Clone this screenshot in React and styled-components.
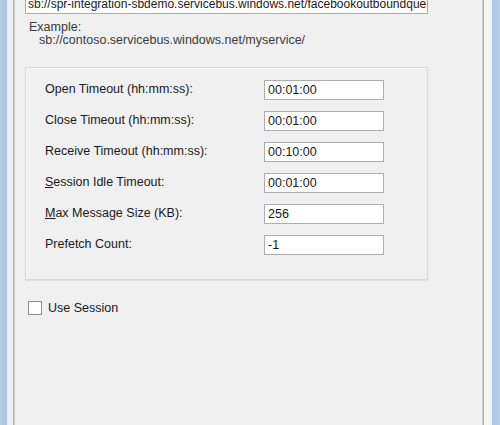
import React from "react";
import styled, { createGlobalStyle } from "styled-components";

const Global = createGlobalStyle`
  html, body {
    margin: 0;
    padding: 0;
    width: 500px;
    height: 425px;
    overflow: hidden;
    background: #f0f0f0;
  }
  #root {
    height: 425px;
  }
`;

const Window = styled.div`
  display: flex;
  width: 500px;
  height: 425px;
  font-family: "Liberation Sans", Arial, sans-serif;
  font-size: 12.5px;
  color: #1a1a1a;
`;

const Frame = styled.div`
  width: ${(p) => p.w}px;
  flex-shrink: 0;
  background: ${(p) => p.bg};
`;

const Content = styled.div`
  flex: 1;
  display: flex;
  background: #f0f0f0;
  overflow: hidden;
`;

const Main = styled.div`
  width: 403px;
  padding: 0 0 0 10px;
  display: flex;
  flex-direction: column;
`;

const TextBox = styled.div`
  height: 18px;
  width: ${(p) => p.w}px;
  border: 1px solid #abadb3;
  background: #fff;
  padding: 0 3px;
  box-sizing: content-box;
  display: flex;
  align-items: center;
  white-space: nowrap;
  overflow: hidden;
  color: #1a1a1a;
`;

const UrlBox = styled(TextBox)`
  margin-top: -6px;
  padding: 0 2px;
  width: 397px;
  font-size: 12px;
`;

const Example = styled.div`
  margin-top: 7px;
  margin-left: 4px;
  color: #3a3a3a;
  line-height: 12px;
  div + div {
    margin-top: 1px;
    margin-left: 10px;
  }
`;

const Group = styled.div`
  margin-top: 21px;
  height: 213px;
  box-sizing: border-box;
  border: 1px solid #dadada;
  box-shadow: inset 1px 1px 0 #f7f7f7, 0 1px 1px rgba(0, 0, 0, 0.06);
  padding: 12px 0 0 19px;
  display: flex;
  flex-direction: column;
  gap: 11px;
`;

const Row = styled.div`
  display: flex;
  align-items: center;
  height: 20px;
`;

const Label = styled.div`
  width: 219px;
  margin-top: -2px;
  u {
    text-decoration: underline;
    text-underline-offset: 1px;
  }
`;

const CheckRow = styled.label`
  margin-top: 21px;
  margin-left: 3px;
  display: flex;
  align-items: center;
  gap: 6px;
`;

const Box = styled.span`
  width: 12px;
  height: 12px;
  border: 1px solid #8f8f8f;
  background: #fff;
`;

const fields = [
  { label: "Open Timeout (hh:mm:ss):", value: "00:01:00" },
  { label: "Close Timeout (hh:mm:ss):", value: "00:01:00" },
  { label: "Receive Timeout (hh:mm:ss):", value: "00:10:00" },
  { label: "ession Idle Timeout:", key: "S", value: "00:01:00" },
  { label: "ax Message Size (KB):", key: "M", value: "256" },
  { label: "Prefetch Count:", value: "-1" },
];

export default function App() {
  return (
    <>
      <Global />
      <Window>
        <Frame w={7} bg="linear-gradient(90deg, #b4cde9, #a9c4e4)" />
        <Frame w={6} bg="#eef0f3" />
        <Frame w={2} bg="linear-gradient(90deg, #a6a6a6, #d6d6d6)" />
        <Content>
          <Main>
            <UrlBox>
              sb://spr-integration-sbdemo.servicebus.windows.net/facebookoutboundqueue
            </UrlBox>
            <Example>
              <div>Example:</div>
              <div>sb://contoso.servicebus.windows.net/myservice/</div>
            </Example>
            <Group>
              {fields.map((f) => (
                <Row key={f.label}>
                  <Label>
                    {f.key && <u>{f.key}</u>}
                    {f.label}
                  </Label>
                  <TextBox w={112}>{f.value}</TextBox>
                </Row>
              ))}
            </Group>
            <CheckRow>
              <Box />
              Use Session
            </CheckRow>
          </Main>
        </Content>
        <Frame w={2} bg="linear-gradient(90deg, #d6d6d6, #a6a6a6)" />
        <Frame w={8} bg="#f4f5f7" />
        <Frame w={8} bg="linear-gradient(90deg, #aac5e5, #b7cfe9)" />
      </Window>
    </>
  );
}
